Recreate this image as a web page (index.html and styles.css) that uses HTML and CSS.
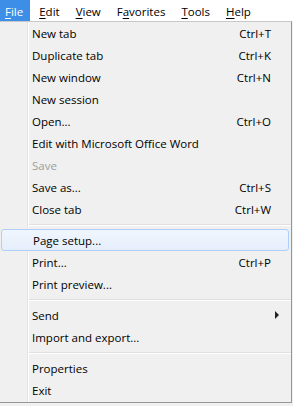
FILE: index.html
```
<!DOCTYPE html>
<html>
<head>
<meta charset="utf-8">
<link rel="stylesheet" href="styles.css">
</head>
<body>
<div class="screen">
  <nav class="menubar">
    <span class="mb-item active"><u>F</u>ile</span>
    <span class="mb-item"><u>E</u>dit</span>
    <span class="mb-item"><u>V</u>iew</span>
    <span class="mb-item">F<u>a</u>vorites</span>
    <span class="mb-item"><u>T</u>ools</span>
    <span class="mb-item"><u>H</u>elp</span>
  </nav>
  <div class="menu">
    <div class="item"><span>New tab</span><span class="key">Ctrl+T</span></div>
    <div class="item"><span>Duplicate tab</span><span class="key">Ctrl+K</span></div>
    <div class="item"><span>New window</span><span class="key">Ctrl+N</span></div>
    <div class="item"><span>New session</span></div>
    <div class="item"><span>Open...</span><span class="key">Ctrl+O</span></div>
    <div class="item"><span>Edit with Microsoft Office Word</span></div>
    <div class="item disabled"><span>Save</span></div>
    <div class="item"><span>Save as...</span><span class="key">Ctrl+S</span></div>
    <div class="item"><span>Close tab</span><span class="key">Ctrl+W</span></div>
    <div class="sep"></div>
    <div class="item hover"><span>Page setup...</span></div>
    <div class="item"><span>Print...</span><span class="key">Ctrl+P</span></div>
    <div class="item"><span>Print preview...</span></div>
    <div class="sep"></div>
    <div class="item"><span>Send</span><span class="arrow"></span></div>
    <div class="item"><span>Import and export...</span></div>
    <div class="sep"></div>
    <div class="item"><span>Properties</span></div>
    <div class="item"><span>Exit</span></div>
  </div>
</div>
</body>
</html>
```
FILE: styles.css
```
html, body {
  margin: 0;
  padding: 0;
}
body {
  width: 293px;
  height: 406px;
  overflow: hidden;
  background: #8a8a8a;
  font-family: "Open Sans", "Noto Sans", sans-serif;
  font-size: 11.5px;
  color: #000;
}
.screen {
  width: 293px;
  height: 406px;
  display: flex;
  flex-direction: column;
  background: #f0f0f0;
}
.menubar {
  height: 21px;
  display: flex;
  gap: 16px;
  background: #fff;
  flex: none;
}
.mb-item {
  line-height: 21px;
  height: 21px;
  padding-top: 1px;
  box-sizing: border-box;
}
.mb-item u {
  text-decoration-thickness: 1px;
  text-underline-offset: 2px;
}
.mb-item.active {
  background: #3d8ee6;
  color: #fff;
  padding: 1px 7px 0 5px;
  margin-right: -7px;
}
.menu {
  width: 292px;
  height: 382px;
  border-right: 1px solid #979797;
  border-bottom: 1px solid #979797;
  border-top: 1px solid #c8c8c8;
  background: linear-gradient(to right, transparent 27px, #e2e3e3 27px, #e2e3e3 28px, #ffffff 28px, #ffffff 29px, transparent 29px), #f0f0f0;
  box-sizing: border-box;
  flex: none;
}
.item {
  height: 22px;
  display: flex;
  align-items: center;
  justify-content: space-between;
  padding: 0 20px 0 32px;
  box-sizing: border-box;
}
.item.disabled {
  color: #9d9d9d;
}
.item.hover {
  margin: 0 2px 0 1px;
  padding-left: 31px;
  border: 1px solid #aecff7;
  border-radius: 3px;
  background: linear-gradient(to bottom, #f1f6fd, #e4eefb);
}
.key {
  text-align: right;
}
.arrow {
  width: 0;
  height: 0;
  border-top: 4px solid transparent;
  border-bottom: 4px solid transparent;
  border-left: 4px solid #222;
  margin-right: -8px;
}
.sep {
  height: 9px;
  margin-left: 29px;
  box-sizing: border-box;
  padding-top: 4px;
}
.sep::before {
  content: "";
  display: block;
  height: 1px;
  background: #e0e0e0;
  border-bottom: 1px solid #fff;
}
```
